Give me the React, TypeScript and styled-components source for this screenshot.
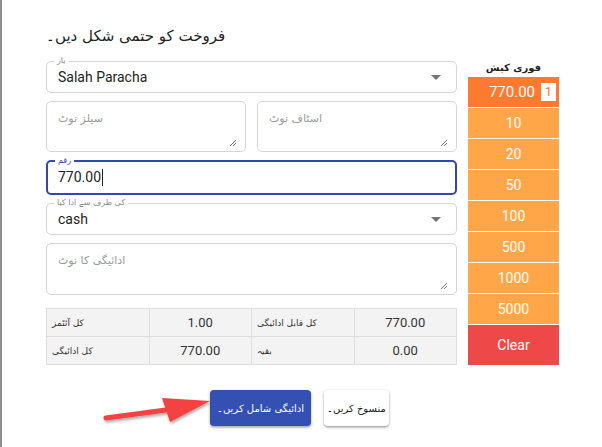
import React, { FC } from 'react';
import styled, { createGlobalStyle } from 'styled-components';

const GlobalStyle = createGlobalStyle`
  html, body {
    margin: 0;
    padding: 0;
    background: #fff;
  }
  body {
    font-family: Roboto, "DejaVu Sans", sans-serif;
    color: #222;
  }
`;

const URDU = `"DejaVu Sans", Roboto, sans-serif`;

const Dialog = styled.div`
  position: relative;
  width: 600px;
  height: 447px;
  border-left: 2px solid #8e8e8e;
  padding-left: 44px;
  box-sizing: border-box;
  overflow: hidden;
`;

const Title = styled.h2`
  margin: 0;
  padding-top: 27px;
  height: 29px;
  font-family: ${URDU};
  font-weight: normal;
  font-size: 15px;
  color: #222;
`;

const Body = styled.div`
  display: flex;
  gap: 11px;
  margin-top: 5px;
`;

const FormCol = styled.div`
  width: 411px;
  display: flex;
  flex-direction: column;
  gap: 8px;
`;

const FieldRow = styled.div`
  display: flex;
  gap: 11px;
`;

const Field = styled.div<{ $h: number; $focused?: boolean }>`
  position: relative;
  flex: 1;
  height: ${(p) => p.$h}px;
  box-sizing: border-box;
  border: ${(p) => (p.$focused ? '2px solid #3049b0' : '1px solid #d6d6d6')};
  border-radius: 5px;
  display: flex;
  align-items: center;
  padding: 0 ${(p) => (p.$focused ? 10 : 11)}px;
  font-size: 14px;
  color: #222;
`;

const FieldLabel = styled.span<{ $focused?: boolean }>`
  position: absolute;
  top: -7px;
  left: 7px;
  padding: 0 3px;
  background: #fff;
  font-family: ${URDU};
  font-size: 8px;
  line-height: 11px;
  color: ${(p) => (p.$focused ? '#3049b0' : '#888')};
`;

const Caret = styled.span`
  display: inline-block;
  width: 1px;
  height: 17px;
  background: #222;
  margin-left: 1px;
`;

const Arrow = styled.span`
  position: absolute;
  right: 15px;
  top: 50%;
  margin-top: -2px;
  width: 0;
  height: 0;
  border-left: 5px solid transparent;
  border-right: 5px solid transparent;
  border-top: 5px solid #757575;
`;

const NoteBox = styled.div<{ $h: number }>`
  position: relative;
  flex: 1;
  height: ${(p) => p.$h}px;
  box-sizing: border-box;
  border: 1px solid #d6d6d6;
  border-radius: 5px;
  padding: 10px 11px;
  font-family: ${URDU};
  font-size: 11px;
  color: #9a9a9a;
`;

const Grip = styled.svg`
  position: absolute;
  right: 8px;
  bottom: 4px;
`;

const SummaryTable = styled.table`
  margin-top: 5px;
  width: 411px;
  border-collapse: collapse;
  table-layout: fixed;
`;

const Cell = styled.td<{ $num?: boolean }>`
  height: 28px;
  box-sizing: border-box;
  background: #f3f3f3;
  border: 1px solid #dedede;
  padding: 0 5px;
  font-family: ${(p) => (p.$num ? 'Roboto, sans-serif' : URDU)};
  font-size: ${(p) => (p.$num ? 13 : 9)}px;
  text-align: ${(p) => (p.$num ? 'center' : 'left')};
  color: #333;
`;

const CashCol = styled.div`
  width: 91px;
  display: flex;
  flex-direction: column;
  gap: 1px;
`;

const CashTitle = styled.div`
  height: 15px;
  text-align: center;
  font-family: ${URDU};
  font-weight: bold;
  font-size: 10px;
  line-height: 14px;
  color: #222;
`;

const CashButton = styled.button<{ $bg: string; $h?: number }>`
  position: relative;
  height: ${(p) => p.$h ?? 30}px;
  border: none;
  margin: 0;
  background: ${(p) => p.$bg};
  color: #fff;
  font-family: Roboto, sans-serif;
  font-size: 14px;
  padding: 0;
  cursor: pointer;
`;

const LeadButton = styled(CashButton)`
  display: flex;
  align-items: center;
  justify-content: flex-end;
  padding-right: 3px;
  gap: 6px;
  font-size: 15px;
`;

const Badge = styled.span`
  background: #fff;
  color: #fe7a2e;
  width: 15px;
  height: 18px;
  line-height: 18px;
  font-size: 13px;
  text-align: center;
`;

const Actions = styled.div`
  display: flex;
  gap: 13px;
  margin-top: 25px;
  padding-left: 164px;
`;

const ActionButton = styled.button<{ $primary?: boolean }>`
  height: 36px;
  padding: 0 ${(p) => (p.$primary ? 7 : 3)}px;
  border: none;
  border-radius: 4px;
  background: ${(p) => (p.$primary ? '#3550b3' : '#fff')};
  color: ${(p) => (p.$primary ? '#fff' : '#222')};
  font-family: ${URDU};
  font-size: 10px;
  box-shadow: 0 1px 3px rgba(0, 0, 0, 0.3), 0 2px 2px rgba(0, 0, 0, 0.12);
  cursor: pointer;
`;

const Pointer = styled.svg`
  position: absolute;
  left: 100px;
  top: 386px;
`;

const ResizeGrip: FC = () => (
  <Grip width="8" height="8" viewBox="0 0 8 8">
    <path d="M1 7L7 1M4 7L7 4" stroke="#666" strokeWidth="0.9" />
  </Grip>
);

const quick = ['10', '20', '50', '100', '500', '1000', '5000'];

const App: FC = () => {
  return (
    <>
      <GlobalStyle />
      <Dialog>
        <Title>فروخت کو حتمی شکل دیں۔</Title>
        <Body>
          <FormCol>
            <Field $h={34}>
              <FieldLabel>یار</FieldLabel>
              Salah Paracha
              <Arrow />
            </Field>
            <FieldRow>
              <NoteBox $h={51}>
                سیلز نوٹ
                <ResizeGrip />
              </NoteBox>
              <NoteBox $h={51}>
                اسٹاف نوٹ
                <ResizeGrip />
              </NoteBox>
            </FieldRow>
            <Field $h={35} $focused>
              <FieldLabel $focused>رقم</FieldLabel>
              770.00
              <Caret />
            </Field>
            <Field $h={34}>
              <FieldLabel>کی طرف سے ادا کیا</FieldLabel>
              cash
              <Arrow />
            </Field>
            <NoteBox $h={50}>
              ادائیگی کا نوٹ
              <ResizeGrip />
            </NoteBox>
            <SummaryTable>
              <tbody>
                <tr>
                  <Cell>کل آئٹمز</Cell>
                  <Cell $num>1.00</Cell>
                  <Cell>کل قابل ادائیگی</Cell>
                  <Cell $num>770.00</Cell>
                </tr>
                <tr>
                  <Cell>کل ادائیگی</Cell>
                  <Cell $num>770.00</Cell>
                  <Cell>بقیہ</Cell>
                  <Cell $num>0.00</Cell>
                </tr>
              </tbody>
            </SummaryTable>
          </FormCol>
          <CashCol>
            <CashTitle>فوری کیش</CashTitle>
            <LeadButton $bg="#fe7a2e">
              770.00
              <Badge>1</Badge>
            </LeadButton>
            {quick.map((q) => (
              <CashButton key={q} $bg="#ffa748">
                {q}
              </CashButton>
            ))}
            <CashButton $bg="#ef4848" $h={40}>
              Clear
            </CashButton>
          </CashCol>
        </Body>
        <Actions>
          <ActionButton $primary>ادائیگی شامل کریں۔</ActionButton>
          <ActionButton>منسوخ کریں۔</ActionButton>
        </Actions>
        <Pointer width="112" height="40" viewBox="0 0 112 40">
          <defs>
            <filter id="sh" x="-10%" y="-30%" width="130%" height="170%">
              <feDropShadow dx="1" dy="2" stdDeviation="1.5" floodOpacity="0.35" />
            </filter>
          </defs>
          <g filter="url(#sh)">
            <path d="M4 32 L64 24" stroke="#f44242" strokeWidth="5" strokeLinecap="round" />
            <path d="M60 12 L108 15 L68 36 Z" fill="#f44242" />
          </g>
        </Pointer>
      </Dialog>
    </>
  );
};

export default App;
